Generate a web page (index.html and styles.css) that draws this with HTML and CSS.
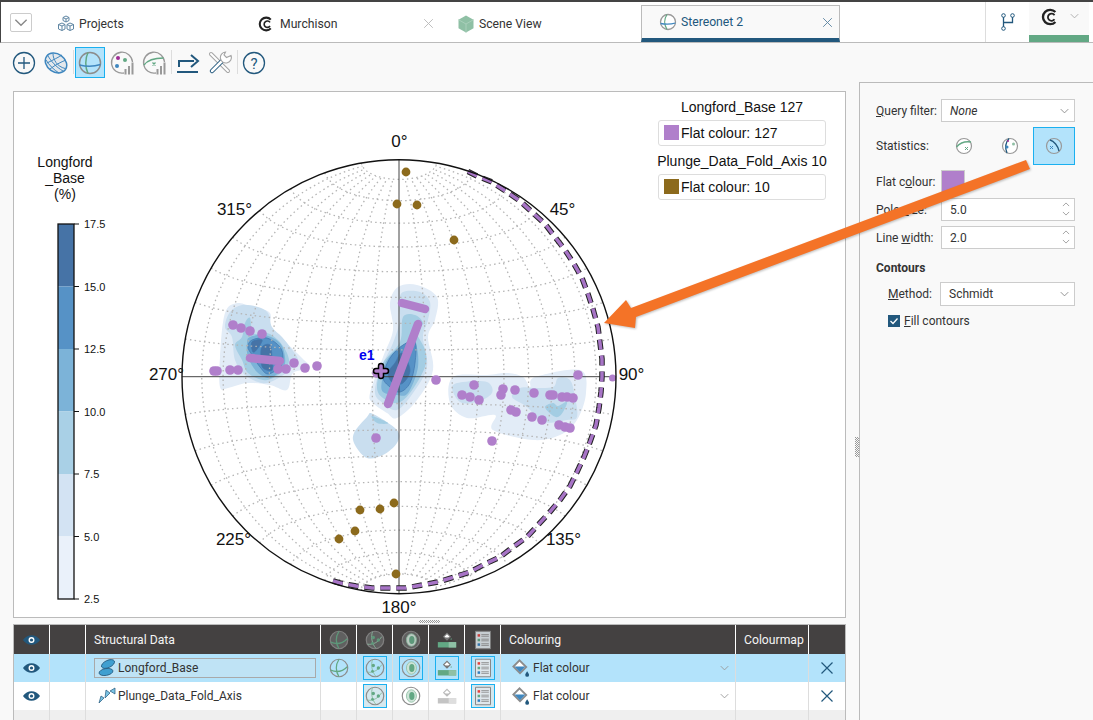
FILE: index.html
```html
<!DOCTYPE html>
<html lang="en">
<head>
    <meta charset="UTF-8">
    <title>Stereonet 2</title>
    <link rel="stylesheet" href="styles.css">
</head>
<body>
    <svg class="defs" width="0" height="0">
        <symbol id="i-net" viewBox="0 0 24 24">
            <circle class="disc" cx="12" cy="12" r="10.500"/>
            <path d="M12 1.500C8 8 8 16 12 22.500M2 14.500c7 3 14 2 20-4" fill="none" stroke="#62a884" stroke-width="1.500"/>
        </symbol>
        <symbol id="i-poles" viewBox="0 0 24 24">
            <circle class="disc" cx="12" cy="12" r="10.500"/>
            <path d="M3 17c6 1 13-2 17-9M9 2c-2 6-1 14 4 20" fill="none" stroke="#8fc0a5" stroke-width="1.200"/>
            <circle cx="10" cy="9" r="2" fill="#62a884"/><circle cx="16" cy="12" r="2" fill="#62a884"/><circle cx="9" cy="16" r="1.700" fill="#62a884"/>
        </symbol>
        <symbol id="i-contour" viewBox="0 0 24 24">
            <circle class="disc" cx="12" cy="12" r="10.500"/>
            <ellipse cx="12.500" cy="12" rx="6" ry="7.500" fill="#cfe3d8" stroke="#8fc0a5"/>
            <ellipse cx="13" cy="12" rx="3.200" ry="4.800" fill="#62a884"/>
        </symbol>
        <symbol id="i-fill" viewBox="0 0 24 24">
            <path d="M8 8l4-4 4 4-4 4z" fill="#fff" stroke="#777" stroke-width="1.300"/>
            <path d="M9 9h6l-3 3z" fill="#777"/>
            <path d="M17 9.500l1 2h-2z" fill="#62a884"/>
            <path d="M1 14.500h22v6.500H1z" fill="#62a884"/><path d="M14 14.500h9v6.500h-9z" fill="#8fc0a5"/>
        </symbol>
        <symbol id="i-fill-off" viewBox="0 0 24 24">
            <path d="M8 8l4-4 4 4-4 4z" fill="#fff" stroke="#bbb" stroke-width="1.300"/>
            <path d="M9 9h6l-3 3z" fill="#bbb"/>
            <path d="M1 14.500h22v6.500H1z" fill="#c4c4c4"/><path d="M14 14.500h9v6.500h-9z" fill="#dedede"/>
        </symbol>
        <symbol id="i-list" viewBox="0 0 24 24">
            <path d="M3 1.500h18v21H3z" fill="#dfe7ec" stroke="#888" stroke-width="1.200"/>
            <path d="M5.500 5h3v3h-3z" fill="#e2403c"/><path d="M5.500 10.500h3v3h-3z" fill="#62a884"/><path d="M5.500 16h3v3h-3z" fill="#2f7fc0"/>
            <path d="M10 5.500h9M10 7.500h9M10 11h9M10 13h9M10 16.500h9M10 18.500h9" stroke="#8a8a8a" stroke-width="1"/>
        </symbol>
        <symbol id="i-eye" viewBox="0 0 20 14">
            <path d="M0 7c4.500-7.500 15.500-7.500 20 0-4.500 7.500-15.500 7.500-20 0z" fill="#22587d"/>
            <circle cx="10" cy="7" r="3.500" fill="#fff"/><circle cx="10" cy="7" r="1.900" fill="#22587d"/>
        </symbol>
        <symbol id="i-bucket" viewBox="0 0 20 20">
            <path d="M9 1.500l7 7-6.500 6.500-7-7z" fill="#fff" stroke="#8c8c8c" stroke-width="2"/>
            <path d="M3.500 8h11.800l-5.800 6z" fill="#3f87bf"/>
            <path d="M17 13c1.300 2 2 2.800 2 3.800a2 2 0 0 1-4 0c0-1 .7-1.800 2-3.800z" fill="#22587d"/>
        </symbol>
        <symbol id="i-cross" viewBox="0 0 14 14">
            <path d="M1.500 1.500l11 11M12.500 1.500l-11 11" fill="none" stroke="currentColor" stroke-width="1.200"/>
        </symbol>
        <symbol id="i-chev" viewBox="0 0 12 8">
            <path d="M1 1.500l5 5 5-5" fill="none" stroke="currentColor" stroke-width="1.200"/>
        </symbol>
        <symbol id="i-logo" viewBox="0 0 20 20">
            <path d="M16 4.500a8 8 0 1 0 0 11" fill="none" stroke="currentColor" stroke-width="2.600"/>
            <path d="M15 8a4 4 0 1 0 0 4.500" fill="none" stroke="currentColor" stroke-width="2"/>
        </symbol>
    </svg>

    <header class="tabbar">
        <button class="tab-menu"><svg width="14" height="9"><use href="#i-chev"/></svg></button>
        <div class="tab">
            <svg class="tab-icon" viewBox="0 0 18 18">
                <path d="M9 1l3 1.500v3L9 7 6 5.500v-3zM5 8l3 1.500v4.500l-3 1.500-3.500-1.500V9.500zM13 8l3.500 1.500v4.500L13 15.500 10 14V9.500zM6 2.500l3 1.500 3-1.500M1.500 9.500L5 11l3-1.500M10 9.500l3 1.500 3.500-1.500M9 4v3M5 11v4.500M13 11v4.500" fill="none" stroke="#5f86a3" stroke-width="1"/>
            </svg>
            <span>Projects</span>
        </div>
        <div class="tab">
            <svg class="tab-icon logo"><use href="#i-logo"/></svg>
            <span>Murchison</span>
            <svg class="tab-close muted"><use href="#i-cross"/></svg>
        </div>
        <div class="tab">
            <svg class="tab-icon" viewBox="0 0 18 18">
                <path d="M9 .5l7.500 4.200v8.600L9 17.500l-7.500-4.200V4.700z" fill="#8fc0a5"/>
                <path d="M9 9l7.500-4.300M9 9L1.500 4.700M9 9v8.500" stroke="#a9cfba" stroke-width="1"/>
            </svg>
            <span>Scene View</span>
        </div>
        <div class="tab tab-active">
            <svg class="tab-icon" viewBox="0 0 18 18">
                <circle cx="9" cy="9" r="7.500" fill="#fff" stroke="#999" stroke-width="1.300"/>
                <path d="M8 1.500C5 6 5 12 8 16.500" fill="none" stroke="#62a884" stroke-width="1.300"/>
                <path d="M1.500 10.500c5 1 10 1 15-.5" fill="none" stroke="#3f87bf" stroke-width="1.300"/>
            </svg>
            <span>Stereonet 2</span>
            <svg class="tab-close"><use href="#i-cross"/></svg>
        </div>
        <div class="tabbar-right">
            <div class="branch">
                <svg width="16" height="20" viewBox="0 0 16 20">
                    <path d="M3.500 5v10M3.500 10.500h9V5" fill="none" stroke="#22587d" stroke-width="1.300"/>
                    <circle cx="3.500" cy="3.500" r="1.800" fill="#fff" stroke="#22587d"/>
                    <circle cx="12.500" cy="3.500" r="1.800" fill="#fff" stroke="#22587d"/>
                    <circle cx="3.500" cy="16.500" r="1.800" fill="#fff" stroke="#22587d"/>
                </svg>
            </div>
            <div class="account">
                <svg class="account-logo"><use href="#i-logo"/></svg>
                <svg class="account-chev"><use href="#i-chev"/></svg>
            </div>
        </div>
    </header>

    <nav class="toolbar">
        <button class="tool">
            <svg viewBox="0 0 24 24"><circle cx="12" cy="12" r="10.500" fill="none" stroke="#22587d" stroke-width="1.300"/><path d="M12 6v12M6 12h12" stroke="#22587d" stroke-width="1.300"/></svg>
        </button>
        <button class="tool">
            <svg viewBox="0 0 24 24">
                <ellipse cx="12" cy="12" rx="11.500" ry="9" transform="rotate(35 12 12)" fill="#e4e8ec" stroke="#3f87bf" stroke-width="1.500"/>
                <path d="M4 5c3 5 8 11 15 15M9 2.500c0 6 4 13 12 15M2 9c3 5 8 10 13 13M3 12c6-3 12-6 15-8M6 18c5-4 11-7 16-9" fill="none" stroke="#3f87bf" stroke-width="1"/>
            </svg>
        </button>
        <span class="tool-sep"></span>
        <button class="tool tool-on">
            <svg viewBox="0 0 24 24"><circle cx="12" cy="12" r="10.500" fill="none" stroke="#8c8c8c" stroke-width="1.500"/><path d="M10 1.500c-3 6-3 15 0 21" fill="none" stroke="#62a884" stroke-width="1.500"/><path d="M1.500 14c6 1.500 15 1.500 21-.5" fill="none" stroke="#3f87bf" stroke-width="1.500"/></svg>
        </button>
        <button class="tool">
            <svg viewBox="0 0 24 24"><path d="M14 22A10.500 10.500 0 1 1 22.500 11" fill="none" stroke="#999" stroke-width="1.300"/><circle cx="8" cy="7" r="2" fill="#a02c96"/><circle cx="15" cy="9" r="2" fill="#62a884"/><circle cx="7" cy="15" r="2" fill="#3f87bf"/><path d="M14.500 18h2v5.500h-2zM18 15h2v8.500h-2zM21.500 11.500h2v12h-2z" fill="#999"/></svg>
        </button>
        <button class="tool">
            <svg viewBox="0 0 24 24"><path d="M14 22A10.500 10.500 0 1 1 22.500 11" fill="none" stroke="#999" stroke-width="1.300"/><path d="M2 14C6 8.500 12 7 21.500 7" fill="none" stroke="#62a884" stroke-width="1.500"/><path d="M10.500 11.500l3 3M13.500 11.500l-3 3" stroke="#62a884" stroke-width="1.300"/><path d="M14.500 18h2v5.500h-2zM18 15h2v8.500h-2zM21.500 11.500h2v12h-2z" fill="#999"/></svg>
        </button>
        <span class="tool-sep"></span>
        <button class="tool">
            <svg viewBox="0 0 24 24"><path d="M3 16v-6h15" fill="none" stroke="#22587d" stroke-width="2"/><path d="M15 4l7 6-7 6" fill="none" stroke="#22587d" stroke-width="2"/><path d="M1 21h21" stroke="#22587d" stroke-width="2"/></svg>
        </button>
        <button class="tool">
            <svg viewBox="0 0 24 24">
                <path d="M3 3l17 17" stroke="#a5a5a5" stroke-width="4" stroke-linecap="round"/>
                <path d="M3 3l17 17" stroke="#fff" stroke-width="2" stroke-linecap="round"/>
                <path d="M16 8L4 20" stroke="#22587d" stroke-width="4.500" stroke-linecap="round"/>
                <path d="M16 8L4 20" stroke="#fff" stroke-width="2.500" stroke-linecap="round"/>
                <path d="M23 4.500a5.500 5.500 0 1 1-5.500-3.500l-1.500 3 2.500 2.500z" fill="#fff" stroke="#a5a5a5" stroke-width="1.100"/>
            </svg>
        </button>
        <span class="tool-sep"></span>
        <button class="tool">
            <svg viewBox="0 0 24 24"><circle cx="12" cy="12" r="10.500" fill="none" stroke="#22587d" stroke-width="1.300"/><text x="12" y="17.500" class="help-mark">?</text></svg>
        </button>
    </nav>

    <main class="workspace">
        <section class="left-col">
            <div class="viewer">
                <svg id="stereonet" viewBox="14 92 831 525"></svg>
                <div class="legend">
                    <div class="legend-title">Longford_Base 127</div>
                    <div class="legend-box"><span class="legend-swatch purple"></span>Flat colour: 127</div>
                    <div class="legend-title">Plunge_Data_Fold_Axis 10</div>
                    <div class="legend-box"><span class="legend-swatch brown"></span>Flat colour: 10</div>
                </div>
            </div>
            <div class="grip-h"></div>
            <div class="table">
                <div class="cell head"><svg class="eye"><use href="#i-eye"/></svg></div>
                <div class="cell head"></div>
                <div class="cell head text">Structural Data</div>
                <div class="cell head dim"><svg class="ico"><use href="#i-net"/></svg></div>
                <div class="cell head dim"><svg class="ico"><use href="#i-poles"/></svg></div>
                <div class="cell head dim"><svg class="ico"><use href="#i-contour"/></svg></div>
                <div class="cell head"><svg class="ico"><use href="#i-fill"/></svg></div>
                <div class="cell head dim"><svg class="ico"><use href="#i-list"/></svg></div>
                <div class="cell head text">Colouring</div>
                <div class="cell head text">Colourmap</div>
                <div class="cell head"></div>

                <div class="cell sel"><svg class="eye"><use href="#i-eye"/></svg></div>
                <div class="cell sel"></div>
                <div class="cell sel name">
                    <div class="name-box">
                        <svg class="obj" viewBox="0 0 18 18"><ellipse cx="10" cy="5" rx="7" ry="3.600" transform="rotate(-25 10 5)" fill="#3f9fd0" stroke="#22587d" stroke-width=".8"/><ellipse cx="8" cy="13" rx="7" ry="3.400" transform="rotate(-10 8 13)" fill="#3f9fd0" stroke="#22587d" stroke-width=".8"/></svg>
                        Longford_Base
                    </div>
                </div>
                <div class="cell sel"><svg class="ico"><use href="#i-net"/></svg></div>
                <div class="cell sel"><span class="toggle"><svg class="ico"><use href="#i-poles"/></svg></span></div>
                <div class="cell sel"><span class="toggle"><svg class="ico"><use href="#i-contour"/></svg></span></div>
                <div class="cell sel"><span class="toggle"><svg class="ico"><use href="#i-fill"/></svg></span></div>
                <div class="cell sel"><span class="toggle"><svg class="ico"><use href="#i-list"/></svg></span></div>
                <div class="cell sel colouring">
                    <svg class="bucket"><use href="#i-bucket"/></svg>Flat colour
                    <svg class="row-chev"><use href="#i-chev"/></svg>
                </div>
                <div class="cell sel"></div>
                <div class="cell sel"><svg class="row-x"><use href="#i-cross"/></svg></div>

                <div class="cell"><svg class="eye"><use href="#i-eye"/></svg></div>
                <div class="cell"></div>
                <div class="cell name">
                    <div class="name-plain">
                        <svg class="obj" viewBox="0 0 18 18"><path d="M1 16l2-7 3 2zM7 11l1-8 4 3zM12 4l5-3 0 6z" fill="#7cc4e4" stroke="#22587d" stroke-width=".7"/></svg>
                        Plunge_Data_Fold_Axis
                    </div>
                </div>
                <div class="cell"></div>
                <div class="cell"><span class="toggle"><svg class="ico"><use href="#i-poles"/></svg></span></div>
                <div class="cell"><svg class="ico"><use href="#i-contour"/></svg></div>
                <div class="cell"><svg class="ico"><use href="#i-fill-off"/></svg></div>
                <div class="cell"><span class="toggle"><svg class="ico"><use href="#i-list"/></svg></span></div>
                <div class="cell colouring">
                    <svg class="bucket"><use href="#i-bucket"/></svg>Flat colour
                    <svg class="row-chev"><use href="#i-chev"/></svg>
                </div>
                <div class="cell"></div>
                <div class="cell"><svg class="row-x"><use href="#i-cross"/></svg></div>

                <div class="cell filler"></div><div class="cell filler"></div><div class="cell filler"></div>
                <div class="cell filler"></div><div class="cell filler"></div><div class="cell filler"></div>
                <div class="cell filler"></div><div class="cell filler"></div><div class="cell filler"></div>
                <div class="cell filler"></div><div class="cell filler"></div>
            </div>
        </section>

        <div class="grip-v"></div>

        <aside class="panel">
            <div class="field">
                <label><u>Q</u>uery filter:</label>
                <div class="combo"><em>None</em><svg class="combo-chev"><use href="#i-chev"/></svg></div>
            </div>
            <div class="field stats">
                <label>Statistics:</label>
                <div class="stat-btns">
                    <button class="stat-btn"><svg viewBox="0 0 18 18"><circle cx="9" cy="9" r="7.500" fill="#fff" stroke="#999" stroke-width="1.200"/><path d="M1.500 10C5 6 10 4 16 5" fill="none" stroke="#62a884" stroke-width="1.300"/><path d="M10 10l3 3M13 10l-3 3" stroke="#62a884"/></svg></button>
                    <button class="stat-btn"><svg viewBox="0 0 18 18"><circle cx="9" cy="9" r="7.500" fill="#fff" stroke="#999" stroke-width="1.200"/><path d="M8 1.500C4 6 4 11 6 16" fill="none" stroke="#22587d" stroke-width="1.300"/><circle cx="12.500" cy="7" r="1.500" fill="#8fc0a5"/><circle cx="6" cy="10" r="1.500" fill="#3f87bf"/><circle cx="7" cy="4" r="1" fill="#a02c96"/></svg></button>
                    <button class="stat-btn stat-on"><svg viewBox="0 0 18 18"><circle cx="9" cy="9" r="7.500" fill="none" stroke="#999" stroke-width="1.200"/><path d="M5 3c4 1 8 6 9 11" fill="none" stroke="#22587d" stroke-width="1.300"/><path d="M5 9l3 3M8 9l-3 3" stroke="#3f87bf"/></svg></button>
                </div>
            </div>
            <div class="field">
                <label>Flat c<u>o</u>lour:</label>
                <span class="swatch"></span>
            </div>
            <div class="field">
                <label>Pole <u>s</u>ize:</label>
                <div class="spin">5.0<span class="spin-arrows"><svg><use href="#i-chev"/></svg><svg><use href="#i-chev"/></svg></span></div>
            </div>
            <div class="field">
                <label>Line <u>w</u>idth:</label>
                <div class="spin">2.0<span class="spin-arrows"><svg><use href="#i-chev"/></svg><svg><use href="#i-chev"/></svg></span></div>
            </div>
            <h3 class="group-title">Contours</h3>
            <div class="field field-sub">
                <label><u>M</u>ethod:</label>
                <div class="combo">Schmidt<svg class="combo-chev"><use href="#i-chev"/></svg></div>
            </div>
            <div class="check-row">
                <span class="check"><svg viewBox="0 0 12 12"><path d="M2.500 6l2.500 2.500 4.500-5" fill="none" stroke="#fff" stroke-width="1.300"/></svg></span>
                <span><u>F</u>ill contours</span>
            </div>
        </aside>
    </main>

    <svg class="callout" viewBox="0 0 1093 720">
        <path class="callout-arrow" d="M604 323L626 300 631 308 1026 160 1030 169 636 317 635 328z"/>
    </svg>

    <script src="script.js"></script>
</body>
</html>
```

FILE: styles.css
```css
* {
    box-sizing: border-box;
}

html, body {
    margin: 0;
    padding: 0;
}

body {
    width: 1093px;
    height: 720px;
    overflow: hidden;
    position: relative;
    background-color: #f9f9f9;
    color: #333;
    font-family: Roboto, "Liberation Sans", sans-serif;
    font-size: 12px;
}

button {
    padding: 0;
    border: none;
    background: none;
    font: inherit;
}

.defs {
    position: absolute;
}

.disc {
    fill: var(--disc, none);
    stroke: #8c8c8c;
    stroke-width: 1.4;
}

/* top tabs */
.tabbar {
    height: 43px;
    display: flex;
    align-items: stretch;
    background-color: #fff;
    border-top: 2px solid #444;
    border-bottom: 1px solid #bbb;
    border-left: 1px solid #444;
}

.tab-menu {
    width: 22px;
    height: 19px;
    margin: 11px 8px 0 9px;
    border: 1px solid #ccc;
    border-radius: 2px;
    color: #888;
    display: flex;
    align-items: center;
    justify-content: center;
}

.tab {
    width: 200px;
    height: 37px;
    margin-top: 3px;
    padding-left: 17px;
    padding-right: 6px;
    display: flex;
    align-items: center;
    gap: 4px;
    color: #333;
    font-size: 12.2px;
    position: relative;
}

.tab-icon {
    width: 18px;
    height: 18px;
    flex: none;
}

.tab-icon.logo {
    color: #222;
    width: 16px;
    height: 16px;
    margin: 0 2px 0 1px;
}

.tab-close {
    width: 11px;
    height: 11px;
    margin-left: auto;
    color: #5f86a3;
    margin-right: 0;
}

.tab-close.muted {
    color: #bbb;
}

.tab-active {
    margin-left: 1px;
    width: 199px;
    background-color: #f9f9f9;
    border: 1px solid #bbb;
    border-bottom: 4px solid #22587d;
    color: #22587d;
}

.tabbar-right {
    margin-left: auto;
    display: flex;
    padding-right: 4px;
}

.branch {
    width: 44px;
    border-left: 1px solid #ddd;
    display: flex;
    align-items: center;
    justify-content: center;
}

.account {
    width: 60px;
    height: 40px;
    position: relative;
    background-color: #f9f9f9;
    border-bottom: 7px solid #62a884;
}

.account-logo {
    position: absolute;
    left: 12px;
    top: 6px;
    width: 18px;
    height: 18px;
    color: #222;
}

.account-chev {
    position: absolute;
    left: 41px;
    top: 11px;
    width: 9px;
    height: 6px;
    color: #aaa;
}

/* toolbar */
.toolbar {
    height: 39px;
    padding: 4px 0 0 9px;
    display: flex;
    align-items: flex-start;
    gap: 2px;
}

.tool {
    width: 30px;
    height: 31px;
    border: 1px solid transparent;
    display: flex;
    align-items: center;
    justify-content: center;
}

.tool svg {
    width: 24px;
    height: 24px;
}

.tool-on {
    background-color: #b3e3fb;
    border-color: #1ab0f0;
}

.tool-sep {
    width: 1px;
    height: 24px;
    margin: 3px -1px 0 0;
    background-color: #ddd;
}

.help-mark {
    font-family: Roboto, sans-serif;
    font-size: 15px;
    text-anchor: middle;
    fill: #22587d;
}

/* main area */
.workspace {
    height: 638px;
    display: flex;
}

.left-col {
    width: 845px;
    padding: 9px 0 0 13px;
    flex: none;
}

.viewer {
    width: 833px;
    height: 527px;
    position: relative;
    background-color: #fff;
    border: 1px solid #bbb;
}

#stereonet {
    display: block;
    width: 831px;
    height: 525px;
}

.grid-line {
    fill: none;
    stroke: #b4b4b4;
    stroke-width: 1.3;
    stroke-dasharray: 1.5 3.2;
}

.axis-line {
    stroke: #444;
    stroke-width: 1;
}

.net-edge {
    fill: none;
    stroke: #111;
    stroke-width: 1.4;
}

.net-label {
    font-family: "Liberation Sans", sans-serif;
    font-size: 17px;
    fill: #111;
    text-anchor: middle;
}

.bar-title {
    font-family: "Liberation Sans", sans-serif;
    font-size: 14px;
    fill: #111;
    text-anchor: middle;
}

.bar-tick {
    font-family: "Liberation Sans", sans-serif;
    font-size: 11px;
    fill: #111;
}

.bar-frame {
    fill: none;
    stroke: #111;
    stroke-width: 1.3;
}

.e1-label {
    font-family: "Liberation Sans", sans-serif;
    font-size: 14px;
    font-weight: bold;
    fill: #0000f0;
}

.legend {
    position: absolute;
    left: 644px;
    top: 5px;
    width: 168px;
    font-family: "Liberation Sans", sans-serif;
    font-size: 14px;
    color: #111;
    text-align: center;
}

.legend-title {
    height: 23px;
    line-height: 20px;
    white-space: nowrap;
    display: flex;
    justify-content: center;
}

.legend-box {
    height: 26px;
    margin-bottom: 5px;
    padding: 0 0 1px 5px;
    display: flex;
    align-items: center;
    gap: 2px;
    border: 1px solid #ddd;
    border-radius: 3px;
    background-color: #fff;
}

.legend-swatch {
    width: 15px;
    height: 15px;
}

.purple {
    background-color: #b07fcb;
}

.brown {
    background-color: #8c6a1c;
}

.grip-h {
    height: 6px;
    width: 21px;
    margin-left: 406px;
    padding: 2px 0 1px;
    background-image: repeating-conic-gradient(#999 0 25%, transparent 0 50%);
    background-size: 2px 2px;
    background-clip: content-box;
}

/* data table */
.table {
    width: 833px;
    height: 96px;
    display: grid;
    grid-template-columns: 36px 36px 235px repeat(5, 36px) 235px 73px 36px;
    grid-template-rows: 29px 28px 28px 10px;
    border: 1px solid #bbb;
    border-bottom: none;
    background-color: #fff;
}

.cell {
    display: flex;
    align-items: center;
    justify-content: center;
    border-right: 1px solid #ddd;
    font-size: 12px;
    color: #333;
    min-width: 0;
}

.cell:nth-child(11n) {
    border-right: none;
}

.head {
    background-color: #444141;
    border-right-color: #fff;
    color: #f4f4f4;
    --disc: #666;
}

.head.text {
    justify-content: flex-start;
    padding-left: 8px;
    white-space: nowrap;
    font-size: 12.2px;
}

.dim .ico {
    opacity: .85;
}

.sel {
    background-color: #b3e3fb;
}

.filler {
    background-color: #efefef;
}

.eye {
    width: 17px;
    height: 12px;
}

.ico {
    width: 20px;
    height: 20px;
}

.toggle {
    width: 24px;
    height: 24px;
    display: flex;
    align-items: center;
    justify-content: center;
    background-color: #d5e8ee;
    border: 1px solid #1ab0f0;
}

.sel .toggle {
    background-color: transparent;
}

.name {
    justify-content: flex-start;
    padding-left: 8px;
}

.name-box, .name-plain {
    width: 222px;
    height: 20px;
    display: flex;
    align-items: center;
    gap: 2px;
    white-space: nowrap;
    border: 1px solid transparent;
    font-size: 12px;
}

.name-box {
    border-color: #a9a9a9;
    background-color: #bfe3f5;
}

.obj {
    width: 18px;
    height: 18px;
    margin-left: 3px;
    flex: none;
}

.colouring {
    justify-content: flex-start;
    padding-left: 10px;
    gap: 3px;
    white-space: nowrap;
    position: relative;
}

.bucket {
    width: 19px;
    height: 19px;
}

.row-chev {
    position: absolute;
    left: 219px;
    top: 11px;
    width: 9px;
    height: 6px;
    color: #999;
}

.row-x {
    width: 14px;
    height: 14px;
    color: #22587d;
}

/* properties panel */
.grip-v {
    width: 14px;
    flex: none;
    padding: 355px 0 263px 10px;
    background-image: repeating-conic-gradient(#999 0 25%, transparent 0 50%);
    background-size: 2px 2px;
    background-clip: content-box;
}

.panel {
    width: 234px;
    padding: 16px 18px 0 16px;
    background-color: #f9f9f9;
    border-left: 1px solid #bbb;
    border-top: 1px solid #bbb;
    display: flex;
    flex-direction: column;
    gap: 5px;
}

.field {
    height: 23px;
    display: grid;
    grid-template-columns: 65px 1fr;
    align-items: center;
    white-space: nowrap;
}

.field label {
    color: #333;
}

.combo, .spin {
    height: 23px;
    padding-left: 8px;
    display: flex;
    align-items: center;
    position: relative;
    background-color: #fff;
    border: 1px solid #ccc;
    font-size: 12px;
}

.combo-chev {
    position: absolute;
    right: 5px;
    top: 8px;
    width: 9px;
    height: 6px;
    color: #888;
}

.spin-arrows {
    position: absolute;
    right: 4px;
    top: 3px;
    display: flex;
    flex-direction: column;
    gap: 4px;
    color: #888;
}

.spin-arrows svg {
    display: block;
    width: 8px;
    height: 5px;
}

.spin-arrows svg:first-child {
    transform: rotate(180deg);
}

.stats {
    height: 38px;
}

.stat-btns {
    display: flex;
    justify-content: flex-end;
    height: 38px;
}

.stat-btn {
    width: 46px;
    height: 38px;
    display: flex;
    align-items: center;
    justify-content: center;
    border: 1px solid transparent;
}

.stat-btn svg {
    width: 18px;
    height: 18px;
}

.stat-on {
    width: 42px;
    background-color: #b3e3fb;
    border-color: #1ab0f0;
}

.swatch {
    width: 24px;
    height: 23px;
    background-color: #b07fcb;
    border: 1px solid #ccc;
}

.group-title {
    margin: 7px 0 0;
    height: 15px;
    line-height: 15px;
    font-size: 12px;
    font-weight: bold;
    color: #333;
}

.field-sub {
    margin-top: 1px;
    height: 24px;
    padding-left: 12px;
    grid-template-columns: 52px 1fr;
}

.field-sub .combo {
    height: 24px;
}

.check-row {
    margin: 3px 0 0 12px;
    display: flex;
    align-items: center;
    gap: 4px;
}

.check {
    width: 12px;
    height: 12px;
    background-color: #22587d;
    display: flex;
}

/* orange annotation on top of the screenshot */
.callout {
    position: absolute;
    left: 0;
    top: 0;
    width: 1093px;
    height: 720px;
    pointer-events: none;
    filter: drop-shadow(1px 1px 1px rgba(0, 0, 0, .25));
}

.callout-arrow {
    fill: #f47327;
}
```

FILE: script.js
```js
// draws the stereonet plot, all coordinates are page pixels
const NS = 'http://www.w3.org/2000/svg';
const svg = document.getElementById('stereonet');
const CX = 399, CY = 376.7, R = 217;

function add(tag, attrs, text) {
    const el = document.createElementNS(NS, tag);
    for (const k in attrs) el.setAttribute(k, attrs[k]);
    if (text) el.textContent = text;
    svg.appendChild(el);
    return el;
}

// lambert equal area
function project(lon, lat) {
    const a = lon * Math.PI / 180, b = lat * Math.PI / 180;
    const k = Math.sqrt(1 / (1 + Math.cos(b) * Math.cos(a)));
    return [CX + R * k * Math.cos(b) * Math.sin(a), CY - R * k * Math.sin(b)];
}

function smooth(p) {
    const n = p.length;
    let d = `M${p[0][0]} ${p[0][1]}`;
    for (let i = 0; i < n; i++) {
        const a = p[(i - 1 + n) % n], b = p[i], c = p[(i + 1) % n], e = p[(i + 2) % n];
        const c1 = [b[0] + (c[0] - a[0]) / 6, b[1] + (c[1] - a[1]) / 6];
        const c2 = [c[0] - (e[0] - b[0]) / 6, c[1] - (e[1] - b[1]) / 6];
        d += `C${c1[0]} ${c1[1]} ${c2[0]} ${c2[1]} ${c[0]} ${c[1]}`;
    }
    return d + 'Z';
}

// contour colours, low to high
const LEVELS = ['#e2ecf7', '#c9deef', '#a3cde3', '#7cb3d8', '#5692c6', '#4673a6'];

const CONTOURS = [
    // left cluster
    [0, [[220,387],[220,357],[225,313],[238,303],[253,308],[270,313],[270,333],[285,342],[302,358],[310,368],[293,373],[287,390],[270,385],[247,383],[228,388]]],
    [1, [[230,312],[242,305],[258,307],[268,313],[272,327],[282,337],[290,347],[298,360],[290,370],[275,380],[262,383],[245,375],[235,360],[232,337],[225,327]]],
    [2, [[242,337],[245,323],[250,318],[253,333],[267,333],[278,340],[287,353],[288,365],[275,377],[263,380],[248,373],[242,360],[235,345]]],
    [3, [[250,337],[265,335],[280,343],[285,357],[283,368],[270,378],[257,372],[248,357],[247,343]]],
    [4, [[252,340],[267,338],[280,347],[283,358],[280,367],[268,374],[260,367],[252,355],[248,347]]],
    [5, [[252,342],[262,340],[258,348],[253,352]]],
    [5, [[262,347],[270,345],[272,358],[272,370],[263,368],[261,358]]],
    // centre cluster
    [0, [[390,303],[398,287],[417,285],[437,297],[435,320],[428,337],[433,370],[417,400],[397,418],[387,413],[373,403],[370,393],[383,357],[393,330]]],
    [1, [[399,303],[403,292],[420,292],[430,302],[428,320],[423,337],[427,367],[413,393],[397,410],[383,403],[375,393],[380,370],[393,343],[400,320]]],
    [2, [[403,317],[415,315],[423,323],[417,333],[425,350],[425,367],[410,393],[397,403],[383,398],[377,387],[383,363],[400,342]]],
    [3, [[403,345],[415,342],[418,367],[408,393],[397,395],[383,392],[382,380],[387,360]]],
    [4, [[390,358],[403,345],[415,342],[415,363],[410,383],[400,392],[390,387],[383,377]]],
    [5, [[395,363],[402,353],[410,370],[403,383],[393,383],[388,373]]],
    // lower blob
    [1, [[354,433],[367,417],[373,414],[397,430],[397,443],[383,455],[367,458],[355,445]]],
    [2, [[372,416],[388,423],[377,423]]],
    // right cluster
    [0, [[453,377],[487,375],[507,373],[523,377],[530,387],[535,377],[580,370],[586,393],[577,420],[560,435],[533,440],[493,430],[495,415],[467,418],[450,403]]],
    [1, [[452,387],[463,382],[487,382],[492,393],[477,402],[460,402]]],
    [1, [[512,397],[520,388],[533,388],[553,387],[558,378],[570,380],[575,397],[577,417],[567,420],[543,422],[527,407]]],
    [2, [[545,407],[553,403],[558,406],[567,402],[563,412],[558,417],[552,415]]]
];

const RING = [[333,581],[340,583],[356,586],[372,588],[388,588],[406,588],[422,585],[438,582],[454,577],[470,572],[485,564],[500,557],[513,547],[527,537],[538,525],[549,513],[560,500],[570,486],[577,472],[584,457],[590,442],[596,425],[599,408],[601,392],[602,377],[602,359],[598,327],[593,309],[588,294],[582,278],[574,264],[565,250],[555,237],[545,224],[532,212],[520,201],[507,192],[492,182],[477,176],[463,169]];

const POLES = [[233,325],[241,328],[250,331],[262,334],[278,369],[286,369],[294,363],[305,368],[317,366],[214,371],[217,371],[230,370],[238,370],[376,438],[377,373],[436,380],[474,385],[462,395],[470,397],[479,400],[503,389],[501,395],[515,390],[534,393],[550,395],[553,395],[562,397],[567,397],[573,398],[578,375],[511,410],[516,412],[532,417],[542,420],[559,425],[565,427],[570,428],[492,441]];

const POLE_LINES = [[388,404,418,324],[402,303,425,309],[250,358,280,361]];

const PLUNGES = [[406,172],[397,204],[417,205],[454,240],[394,503],[380,509],[360,510],[355,531],[339,539],[396,574]];

const BAR = ['#4673a6', '#5692c6', '#7cb3d8', '#a9d0e6', '#d3e3f3', '#eaf1fa'];
const BAR_TICKS = ['17.5', '15.0', '12.5', '10.0', '7.5', '5.0', '2.5'];

// colour bar
['Longford', '_Base', '(%)'].forEach((t, i) => {
    add('text', { x: 65, y: 167 + i * 16, class: 'bar-title' }, t);
});
BAR.forEach((c, i) => {
    add('rect', { x: 58, y: 224 + i * 62.5, width: 16, height: 62.5, fill: c });
});
add('rect', { x: 58, y: 224, width: 16, height: 375, class: 'bar-frame' });
BAR_TICKS.forEach((t, i) => {
    const y = 224 + i * 62.5;
    add('line', { x1: 74, x2: 79, y1: y, y2: y, stroke: '#111' });
    add('text', { x: 84, y: y + 4, class: 'bar-tick' }, t);
});

// contours
add('circle', { cx: CX, cy: CY, r: R, fill: '#fff' });
CONTOURS.forEach(([lvl, pts]) => {
    const o = { d: smooth(pts), fill: LEVELS[lvl] };
    if (lvl >= 4) {
        o.stroke = '#3f76ad';
        o['stroke-width'] = 0.7;
    }
    add('path', o);
});

// graticule, meridians stop at 80 like the reference
for (let lon = -80; lon <= 80; lon += 10) {
    if (lon === 0) continue;
    const pts = [];
    for (let lat = -80; lat <= 80; lat += 4) pts.push(project(lon, lat).map(v => v.toFixed(1)).join(' '));
    add('path', { d: 'M' + pts.join('L'), class: 'grid-line' });
}
for (let lat = -80; lat <= 80; lat += 10) {
    if (lat === 0) continue;
    const pts = [];
    for (let lon = -90; lon <= 90; lon += 4) pts.push(project(lon, lat).map(v => v.toFixed(1)).join(' '));
    add('path', { d: 'M' + pts.join('L'), class: 'grid-line' });
}
add('line', { x1: CX - R, x2: CX + R, y1: CY, y2: CY, class: 'axis-line' });
add('line', { x1: CX, x2: CX, y1: CY - R, y2: CY + R, class: 'axis-line' });

// dashed great circle
const ringD = 'M' + RING.map(p => p.join(' ')).join('L');
add('path', { d: ringD, fill: 'none', stroke: '#222', 'stroke-width': 5.5, 'stroke-dasharray': '10 6' });
add('path', { d: ringD, fill: 'none', stroke: '#a774c6', 'stroke-width': 3.5, 'stroke-dasharray': '10 6' });

// poles and plunges
POLE_LINES.forEach(([x1, y1, x2, y2]) => {
    add('line', { x1, y1, x2, y2, stroke: '#b07fcb', 'stroke-width': 8.5, 'stroke-linecap': 'round' });
});
POLES.forEach(([cx, cy]) => add('circle', { cx, cy, r: 4.8, fill: '#b07fcb' }));
add('circle', { cx: 612.5, cy: 378, r: 3.5, fill: '#b07fcb' });
PLUNGES.forEach(([cx, cy]) => add('circle', { cx, cy, r: 4.4, fill: '#8c6a1c' }));

add('circle', { cx: CX, cy: CY, r: R, class: 'net-edge' });

// eigenvector marker
add('path', { d: 'M381 366v10M376 371h10', stroke: '#000', 'stroke-width': 6.5, 'stroke-linecap': 'round' });
add('path', { d: 'M381 366v10M376 371h10', stroke: '#b07fcb', 'stroke-width': 3.5, 'stroke-linecap': 'round' });
add('text', { x: 359, y: 360, class: 'e1-label' }, 'e1');

// bearings
[['0°', 399.5, 147], ['45°', 562.5, 215], ['90°', 631.5, 380], ['135°', 563.5, 545], ['180°', 399, 613], ['225°', 233.5, 545], ['270°', 166.5, 380], ['315°', 234.5, 215]].forEach(([t, x, y]) => {
    add('text', { x, y, class: 'net-label' }, t);
});
```
